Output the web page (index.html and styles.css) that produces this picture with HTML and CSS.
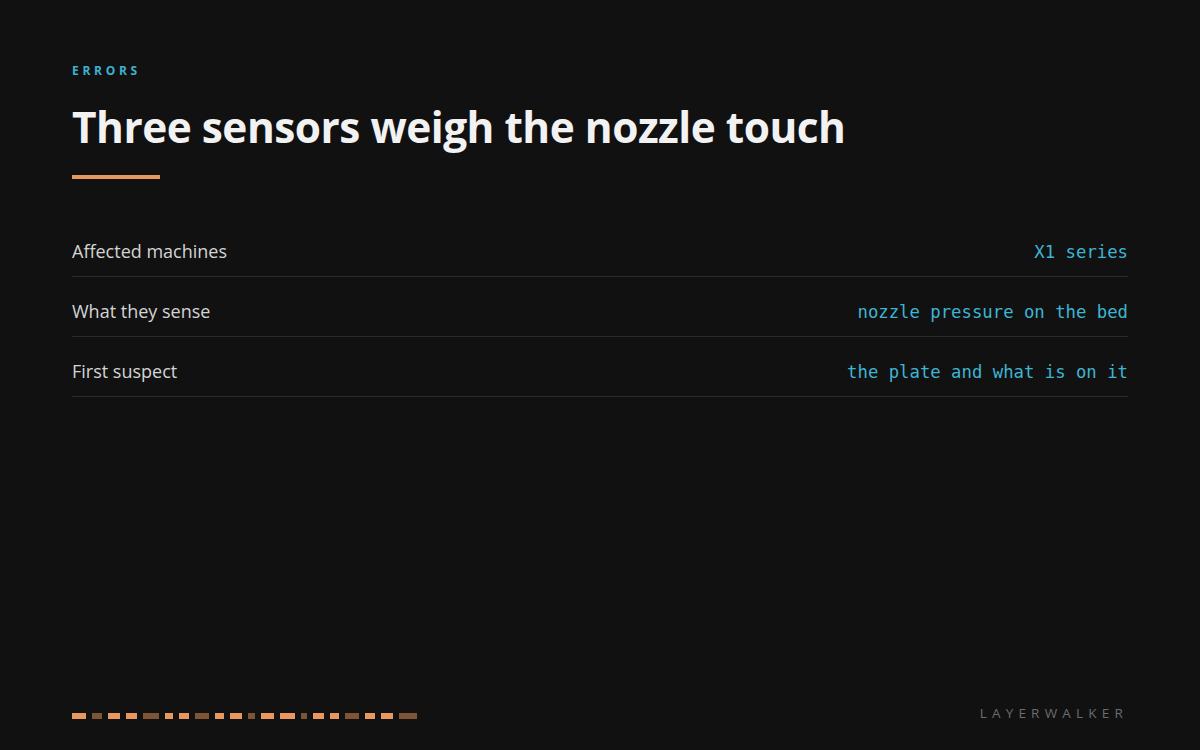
FILE: index.html
```html
<!DOCTYPE html>
<html lang="en">
<head>
    <meta charset="UTF-8">
    <meta name="viewport" content="width=device-width, initial-scale=1.0">
    <title>Errors - Layerwalker</title>
    <link rel="stylesheet" href="styles.css">
</head>
<body>
    <div class="slide">
        <div class="eyebrow">ERRORS</div>
        <h1 class="title">Three sensors weigh the nozzle touch</h1>
        <div class="accent"></div>

        <div class="facts">
            <div class="fact">
                <span class="fact-label">Affected machines</span>
                <span class="fact-value">X1 series</span>
            </div>
            <div class="fact">
                <span class="fact-label">What they sense</span>
                <span class="fact-value">nozzle pressure on the bed</span>
            </div>
            <div class="fact">
                <span class="fact-label">First suspect</span>
                <span class="fact-value">the plate and what is on it</span>
            </div>
        </div>

        <div class="footer">
            <div class="layers">
                <span class="seg" style="width:14px"></span>
                <span class="seg dim" style="width:10px"></span>
                <span class="seg" style="width:12px"></span>
                <span class="seg" style="width:11px"></span>
                <span class="seg dim" style="width:16px"></span>
                <span class="seg" style="width:8px"></span>
                <span class="seg" style="width:10px"></span>
                <span class="seg dim" style="width:14px"></span>
                <span class="seg" style="width:9px"></span>
                <span class="seg" style="width:12px"></span>
                <span class="seg dim" style="width:7px"></span>
                <span class="seg" style="width:13px"></span>
                <span class="seg" style="width:15px"></span>
                <span class="seg dim" style="width:6px"></span>
                <span class="seg" style="width:11px"></span>
                <span class="seg" style="width:9px"></span>
                <span class="seg dim" style="width:14px"></span>
                <span class="seg" style="width:10px"></span>
                <span class="seg" style="width:12px"></span>
                <span class="seg dim" style="width:18px"></span>
            </div>
            <div class="brand">LAYERWALKER</div>
        </div>
    </div>
</body>
</html>
```

FILE: styles.css
```css
html, body {
    height: 100%;
    margin: 0;
    background-color: #111111;
}
body {
    font-family: "Open Sans", "Noto Sans", sans-serif;
    color: #f2f2f2;
}
.slide {
    box-sizing: border-box;
    height: 100%;
    padding: 63px 72px 22px;
    display: flex;
    flex-direction: column;
}
.eyebrow {
    font-size: 12px;
    font-weight: 700;
    letter-spacing: 3.7px;
    color: #3cb3d2;
    line-height: 16px;
}
.title {
    margin: 20px 0 0;
    font-size: 42.4px;
    font-weight: 700;
    line-height: 56px;
    letter-spacing: -0.5px;
    color: #f2f2f2;
}
.accent {
    width: 88px;
    height: 4px;
    margin-top: 20px;
    background-color: #e8975e;
}
.facts {
    margin-top: 38px;
}
.fact {
    box-sizing: border-box;
    height: 60px;
    display: flex;
    justify-content: space-between;
    align-items: baseline;
    padding-top: 22px;
    border-bottom: 1px solid #2a2a2a;
}
.fact-label {
    font-size: 18px;
    line-height: 24px;
    color: #d4d4d4;
}
.fact-value {
    font-family: "DejaVu Sans Mono", "Liberation Mono", monospace;
    font-size: 17.3px;
    line-height: 24px;
    color: #3fb4d2;
}
.footer {
    margin-top: auto;
    display: flex;
    justify-content: space-between;
    align-items: center;
}
.layers {
    display: flex;
    gap: 6px;
}
.seg {
    height: 6px;
    background-color: #e8975e;
}
.seg.dim {
    background-color: #7d5436;
}
.brand {
    font-size: 13.5px;
    line-height: 18px;
    letter-spacing: 5.2px;
    color: #6c6c6c;
    margin-bottom: 6px;
}
```
